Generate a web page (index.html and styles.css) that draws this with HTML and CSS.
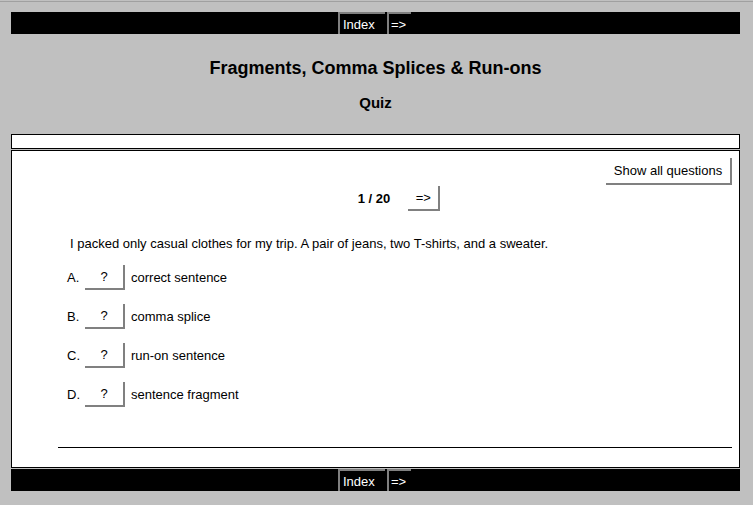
FILE: index.html
```html
<!DOCTYPE html>
<html>
<head>
<meta charset="utf-8">
<link rel="stylesheet" href="styles.css">
</head>
<body>
<div class="topline"></div>
<div class="navbar">
  <span class="navbtn idx">Index</span><span class="navbtn arr">=&gt;</span>
</div>
<div class="titles">
  <h1 class="title">Fragments, Comma Splices &amp; Run-ons</h1>
  <h2 class="sub">Quiz</h2>
</div>
<div class="thinbox"></div>
<div class="main">
  <div class="showrow"><span class="btn showall">Show all questions</span></div>
  <div class="counter"><span class="count">1 / 20</span><span class="btn next">=&gt;</span></div>
  <p class="question">I packed only casual clothes for my trip. A pair of jeans, two T-shirts, and a sweater.</p>
  <div class="options">
    <div class="opt"><span class="letter">A.</span><span class="btn q">?</span><span class="otext">correct sentence</span></div>
    <div class="opt"><span class="letter">B.</span><span class="btn q">?</span><span class="otext">comma splice</span></div>
    <div class="opt"><span class="letter">C.</span><span class="btn q">?</span><span class="otext">run-on sentence</span></div>
    <div class="opt"><span class="letter">D.</span><span class="btn q">?</span><span class="otext">sentence fragment</span></div>
  </div>
  <div class="rule"></div>
</div>
<div class="navbar bottom">
  <span class="navbtn idx">Index</span><span class="navbtn arr">=&gt;</span>
</div>
</body>
</html>
```
FILE: styles.css
```css
html, body { margin: 0; padding: 0; }
body {
  background: #c0c0c0;
  font-family: "Liberation Sans", Arial, sans-serif;
  font-size: 13px;
  color: #000;
  padding: 0 13px 0 11px;
}
.topline { height: 1px; background: #a0a0a0; margin: 1px -13px 10px -11px; }
.navbar {
  height: 22px;
  background: #000;
  display: flex;
  justify-content: center;
  align-items: stretch;
}
.navbtn {
  color: #fff;
  font-size: 13px;
  display: flex;
  align-items: center;
  box-sizing: border-box;
  border-left: 2px solid #808080;
  border-top: 2px solid #808080;
}
.idx { width: 47px; padding-left: 3px; margin-right: 2px; margin-left: -2px; }
.arr { width: 24px; padding-left: 2px; }
.titles { display: flex; flex-direction: column; align-items: center; }
.title { font-size: 18px; font-weight: bold; margin: 23px 0 0 0; line-height: 22px; }
.sub { font-size: 15px; font-weight: bold; margin: 14px 0 0 0; line-height: 20px; }
.thinbox { height: 13px; background: #fff; border: 1px solid #000; margin-top: 21px; }
.main {
  background: #fff;
  border: 1px solid #000;
  margin-top: 1px;
  height: 309px;
  padding: 7px 7px 0 46px;
  display: flex;
  flex-direction: column;
}
.btn {
  display: inline-flex;
  align-items: center;
  justify-content: center;
  box-sizing: border-box;
  background: #fff;
  border-right: 2px solid #808080;
  border-bottom: 2px solid #808080;
  font-size: 13px;
}
.showrow { display: flex; justify-content: flex-end; }
.showall { width: 126px; height: 27px; padding-bottom: 1px; }
.counter { display: flex; justify-content: center; align-items: center; margin-top: 1px; padding-left: 8px; }
.count { font-weight: bold; font-size: 13px; margin-right: 18px; }
.next { width: 32px; height: 25px; }
.question { margin: 25px 0 0 12px; font-size: 13px; line-height: 16px; }
.options { display: flex; flex-direction: column; gap: 14px; margin-top: 13px; margin-left: 9px; }
.opt { display: flex; align-items: center; font-size: 13px; }
.letter { width: 18px; font-size: 13px; }
.q { width: 40px; height: 25px; }
.otext { margin-left: 6px; }
.rule { height: 1px; background: #000; margin-top: auto; margin-bottom: 19px; }
.bottom { margin-top: 1px; }
```
